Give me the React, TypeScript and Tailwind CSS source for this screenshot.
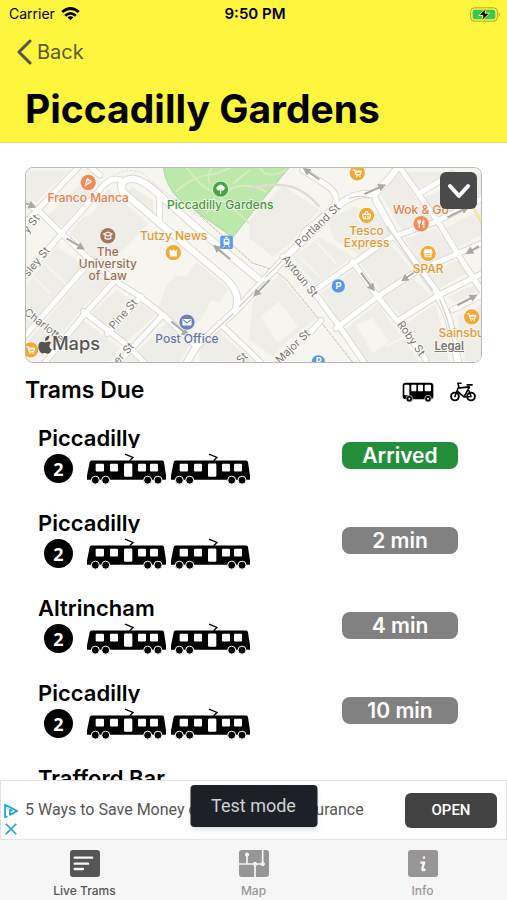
import React from 'react';

const trams = [
  { id: 1, destination: 'Piccadilly', carriages: 2, due: 'Arrived' },
  { id: 2, destination: 'Piccadilly', carriages: 2, due: '2 min' },
  { id: 3, destination: 'Altrincham', carriages: 2, due: '4 min' },
  { id: 4, destination: 'Piccadilly', carriages: 2, due: '10 min' },
  { id: 5, destination: 'Trafford Bar', carriages: 2, due: '12 min' },
];

const mainRoads = [
  'M0 120 L60 155 L125 220 L200 290 L290 365 L360 410 L430 465 L530 560',
  'M0 205 L195 0',
  'M20 345 L125 220 L235 95 Q265 50 300 58 L310 78',
  'M0 545 L215 300',
  'M65 620 L195 462 L285 362',
  'M190 455 L330 562 L375 610',
  'M262 522 L365 410',
  'M285 620 L430 465',
  'M200 10 L240 45',
  'M420 105 L420 190',
  'M600 490 L690 575 L735 620',
  'M850 30 L925 78 Q970 110 935 150 L860 210 Q845 230 840 255',
  'M790 290 L880 390 L960 500 L1040 615',
  'M885 392 L1010 305 L1110 235 L1250 185 L1400 110',
  'M1140 20 L1190 90 L1260 190 L1340 320 L1400 410',
  'M950 505 L1075 410 L1190 335 L1400 245',
  'M1000 305 L1075 410 L1140 490 L1220 600',
  'M1140 480 L1260 405 L1400 335',
  'M1300 450 L1400 400',
  'M875 515 L905 482',
  'M1200 100 L1300 40',
];

const wideRoads = [
  'M310 95 Q290 60 340 55 Q375 60 420 105 L545 215 L715 355',
  'M310 95 L420 190 L600 340 Q665 390 650 440',
  'M495 620 L530 560 L650 450 L725 370 L810 280 L880 215 L965 130 Q1010 95 1065 103 L1110 55 L1140 15',
  'M1070 120 L1130 230 L1255 400 L1290 480 L1320 620',
];

const arrows = [
  'M140 235 L185 263', 'M455 485 L500 522', 'M632 298 L590 262', 'M900 58 L860 30', 'M1035 102 L1090 78',
  'M750 360 L710 402', 'M1025 338 L1060 385', 'M1195 330 L1155 358', 'M1285 172 L1340 145', 'M1380 258 L1350 276',
  'M1315 436 L1365 410', 'M15 128 L38 138',
];

function Pin({ x, y, color, children }: { x: number; y: number; color: string; children?: React.ReactNode }) {
  return (
    <g transform={`translate(${x} ${y})`}>
      <circle r="25" fill="#fff" opacity="0.7" />
      <circle r="23" fill={color} />
      <g fill="none" stroke="#fff" strokeWidth="3.5" strokeLinecap="round" strokeLinejoin="round">{children}</g>
    </g>
  );
}

function MapLabel({ x, y, color, lines }: { x: number; y: number; color: string; lines: string[] }) {
  return (
    <text x={x} y={y} fill={color} stroke="#f8f6f0" strokeWidth="5" paintOrder="stroke" textAnchor="middle" fontSize="36" fontWeight="500">
      {lines.map((line, i) => (
        <tspan key={line} x={x} dy={i === 0 ? 0 : 37}>{line}</tspan>
      ))}
    </text>
  );
}

function StreetLabel({ x, y, angle, name }: { x: number; y: number; angle: number; name: string }) {
  return (
    <text transform={`translate(${x} ${y}) rotate(${angle})`} fill="#77746f" stroke="#fff" strokeWidth="5" paintOrder="stroke" textAnchor="middle" fontSize="33">
      {name}
    </text>
  );
}

const Cart = () => (
  <>
    <path d="M-12 -9 H-8 L-4 6 H9 L12 -5 H-7" />
    <path d="M-6 -2 H10" />
    <path d="M-2 11 h1 M7 11 h1" />
  </>
);

const Basket = () => (
  <>
    <path d="M-12 -3 H12 L9 10 H-9 Z M-6 -4 L-2 -12 M6 -4 L2 -12" />
    <path d="M-4 2 V6 M4 2 V6" />
  </>
);

function StopMap() {
  return (
    <svg viewBox="18 23 1368 584" preserveAspectRatio="xMidYMid slice" className="block h-[194px] w-full" role="img" aria-label="Map of Piccadilly Gardens">
      <rect x="-200" y="-200" width="1900" height="1000" fill="#f7f5ef" />
      <g fill="#efede7">
        <path d="M20 30 H150 L45 130 L20 115Z" />
        <path d="M75 175 L215 40 L240 65 L130 200Z" />
        <path d="M265 85 L385 190 L320 260 L250 320 L150 220 L190 170 L215 165Z" />
        <path d="M20 375 L110 260 L190 315 L20 505Z" />
        <path d="M205 330 L270 370 L185 445 L70 590 H20 V550Z" />
        <path d="M440 375 L470 345 L500 350 L530 305 L625 385 L600 430 L575 420 L550 470 L500 530 L415 450Z" />
        <path d="M290 390 L340 420 L255 500 L215 460Z" />
        <path d="M365 430 L410 465 L320 545 L280 520Z" />
        <path d="M190 480 L300 565 L270 605 H95Z" />
        <path d="M440 490 L510 555 L480 605 H320Z" />
        <path d="M335 80 L400 120 V170 L320 100Z" />
        <path d="M590 510 L700 605 H540 V565Z" />
        <path d="M690 180 L790 75 L900 150 L800 260 L760 290 L690 235Z" />
        <path d="M700 420 L780 345 L890 475 L820 530 L760 590 L690 540Z" />
        <path d="M820 295 L900 230 L1000 290 L890 375Z" />
        <path d="M925 180 L1005 140 L1075 160 L1120 225 L1020 285 L945 240Z" />
        <path d="M905 400 L1000 330 L1060 405 L955 485Z" />
        <path d="M1020 305 L1110 250 L1180 330 L1085 395Z" />
        <path d="M1090 415 L1180 355 L1235 405 L1145 465Z" />
        <path d="M970 515 L1075 430 L1200 605 H1045Z" />
        <path d="M1155 495 L1250 430 L1290 605 H1225Z" />
        <path d="M1085 100 L1140 40 L1240 185 L1150 215Z" />
        <path d="M1160 35 H1290 L1200 85Z" />
        <path d="M1210 115 L1386 35 V100 L1265 170Z" />
        <path d="M1275 205 L1386 150 V225 L1320 260Z" />
        <path d="M1160 235 L1250 205 L1310 275 L1200 315Z" />
        <path d="M1210 345 L1320 300 L1345 340 L1260 385Z" />
        <path d="M1285 410 L1386 365 V390 L1305 430Z" />
        <path d="M1315 470 L1386 435 V605 H1340Z" />
      </g>
      <g fill="#f7f5ef">
        <path d="M725 470 L780 425 L835 500 L775 550Z" />
        <path d="M1010 495 L1060 475 L1110 545 L1060 580Z" />
      </g>
      <g fill="none" stroke="#f8f6f1" strokeWidth="5">
        <path d="M40 350 L90 400 M75 310 L140 375 M840 290 L900 350 M890 245 L950 310 M1015 170 L1045 230 M960 520 L1010 590 M1100 560 L1180 520" />
      </g>
      <path d="M430 15 Q435 75 480 120 L640 232 L700 155 L815 15Z" fill="#bde8ab" stroke="#9cc98c" strokeWidth="2" />
      <g fill="none" stroke="#dcebc4" strokeWidth="5">
        <path d="M500 20 Q540 80 580 95 M470 95 Q510 50 590 40 L640 20 M585 110 L560 160 M600 110 L690 190 M625 90 Q680 60 740 95 M720 20 Q740 60 800 30 M570 70 Q560 40 580 20 M690 30 L640 70" />
      </g>
      <g fill="none" stroke="#dedbd2" strokeWidth="7">
        <path d="M690 85 Q740 70 790 75 Q850 80 900 140" />
        <path d="M280 45 Q330 20 370 40 L420 85 L540 170" strokeWidth="3" strokeDasharray="8 5" />
        <path d="M540 165 L700 310 Q780 330 810 370 L900 480 L1010 620" stroke="#bfbcb5" strokeWidth="3" strokeDasharray="10 3" />
      </g>
      <g fill="none" strokeLinejoin="round" strokeLinecap="round">
        <g stroke="#d8d5cf">
          <g strokeWidth="20">{mainRoads.map(d => <path key={d} d={d} />)}</g>
          <g strokeWidth="24">{wideRoads.map(d => <path key={d} d={d} />)}</g>
        </g>
        <g stroke="#fff">
          <g strokeWidth="15">{mainRoads.map(d => <path key={d} d={d} />)}</g>
          <g strokeWidth="19">{wideRoads.map(d => <path key={d} d={d} />)}</g>
        </g>
        <path d="M545 550 L640 462 M660 440 L735 365 M740 350 L800 290 M990 115 Q1020 103 1050 113 M1105 200 L1180 310 L1240 390 M1262 420 L1285 480 L1305 560" stroke="#d3d0ca" strokeWidth="4" />
        <path d="M1355 125 L1400 215" stroke="#f7e3a1" strokeWidth="7" />
      </g>
      <defs>
        <marker id="tip" viewBox="0 0 10 10" refX="5" refY="5" markerWidth="4" markerHeight="4" orient="auto">
          <path d="M0 0 L10 5 L0 10Z" fill="#aaa8a5" />
        </marker>
      </defs>
      <g stroke="#aaa8a5" strokeWidth="6">
        {arrows.map(d => <path key={d} d={d} markerEnd="url(#tip)" />)}
      </g>

      <g fontFamily="Inter, sans-serif">
        <StreetLabel x={42} y={198} angle={-52} name="y St" />
        <StreetLabel x={58} y={312} angle={-50} name="sley St" />
        <StreetLabel x={66} y={505} angle={38} name="Charlotte" />
        <StreetLabel x={318} y={470} angle={-48} name="Pine St" />
        <StreetLabel x={320} y={588} angle={-48} name="er St" />
        <StreetLabel x={902} y={204} angle={-44} name="Portland St" />
        <StreetLabel x={833} y={355} angle={51} name="Aytoun St" />
        <StreetLabel x={828} y={568} angle={-44} name="Major St" />
        <StreetLabel x={1167} y={542} angle={55} name="Roby St" />
        <StreetLabel x={675} y={603} angle={-44} name="St" />

        <MapLabel x={205} y={126} color="#e6804f" lines={['Franco Manca']} />
        <MapLabel x={602} y={148} color="#45993d" lines={['Piccadilly Gardens']} />
        <MapLabel x={462} y={241} color="#e09b35" lines={['Tutzy News']} />
        <MapLabel x={264} y={287} color="#9a7059" lines={['The', 'University', 'of Law']} />
        <MapLabel x={502} y={549} color="#6374ad" lines={['Post Office']} />
        <MapLabel x={1042} y={224} color="#e09b35" lines={['Tesco', 'Express']} />
        <MapLabel x={1205} y={163} color="#e6804f" lines={['Wok & Go']} />
        <MapLabel x={1227} y={338} color="#e09b35" lines={['SPAR']} />
        <MapLabel x={1360} y={533} color="#e09b35" lines={["Sainsbury's"]} />

        <Pin x={205} y={67} color="#f58a56">
          <path d="M-9 10 L10 -3 L-3 -11Z M-1 -4 h1 M0 2 h1" />
        </Pin>
        <Pin x={603} y={87} color="#46a541">
          <path d="M0 12 V-2" />
          <path d="M-8 2 Q-14 -4 -8 -7 Q0 -17 8 -7 Q14 -4 8 2Z" fill="#fff" />
        </Pin>
        <Pin x={264} y={227} color="#a2765f">
          <path d="M-13 -5 L1 -11 L13 -5 L1 1Z M-8 0 V8 Q1 12 9 8 V0" />
        </Pin>
        <Pin x={461} y={278} color="#f6a832">
          <path d="M-10 -8 L-5 -2 L0 -8 L5 -2 L10 -8 L9 10 H-9Z" fill="#fff" />
        </Pin>
        <Pin x={502} y={487} color="#6c80bd">
          <path d="M-12 -8 H12 V8 H-12Z" fill="#fff" />
          <path d="M-10 -6 L0 2 L10 -6" stroke="#6c80bd" />
        </Pin>
        <Pin x={1042} y={166} color="#f6a832"><Basket /></Pin>
        <Pin x={1014} y={38} color="#f6a832"><Cart /></Pin>
        <Pin x={1358} y={471} color="#f6a832"><Cart /></Pin>
        <Pin x={32} y={570} color="#f6a832"><Cart /></Pin>
        <Pin x={1206} y={191} color="#f58a56">
          <path d="M-6 -11 V11 M-10 -11 V-5 Q-6 0 -2 -5 V-11 M8 11 V-11 Q2 -6 4 2 H8" />
        </Pin>
        <Pin x={1227} y={280} color="#f6a832">
          <path d="M-9 -11 H9 L12 -2 H-12Z" fill="#fff" />
          <path d="M-9 0 V10 H9 V0 M-9 4 H9" />
        </Pin>
        <g fill="#fff" fontSize="28" fontWeight="700" textAnchor="middle">
          <circle cx="957" cy="378" r="20" fill="#5597ef" />
          <text x="958" y="388">P</text>
          <circle cx="897" cy="606" r="20" fill="#5597ef" />
          <text x="898" y="614">P</text>
        </g>
        <g transform="translate(621 247)">
          <rect x="-19" y="-20" width="38" height="40" rx="5" fill="#5b9cf0" />
          <rect x="-9" y="-12" width="18" height="20" rx="4" fill="#fff" />
          <path d="M-5 -7 H5 V-2 H-5Z" fill="#5b9cf0" />
          <path d="M-4 -15 H4 M-5 9 L-9 15 M5 9 L9 15" stroke="#fff" strokeWidth="3" />
        </g>

        <g fill="#555351">
          <text x="96" y="572" fontSize="55" fontWeight="500" stroke="#fff" strokeWidth="4" paintOrder="stroke">Maps</text>
          <g stroke="#fff" strokeWidth="3" paintOrder="stroke">
            <path d="M75 543 C74 534 81 528 88 527 C89 536 83 543 75 543Z" />
            <path d="M75 548 C79 548 84 541 94 549 C86 555 87 566 96 569 C92 579 85 584 79 581 C76 579 73 579 69 581 C61 583 52 565 56 554 C60 543 70 546 75 548Z" />
          </g>
        </g>
        <text x="1246" y="570" fontSize="34" fontWeight="600" fill="#77746f" stroke="#fff" strokeWidth="4" paintOrder="stroke" textDecoration="underline">Legal</text>
      </g>
    </svg>
  );
}

function TramIcon() {
  return (
    <svg viewBox="24 4 240 98" className="h-[33px] w-20" aria-hidden="true">
      <path d="M138 10 L162 20 L152 30" fill="none" stroke="#000" strokeWidth="4" />
      <path d="M38 29 H250 Q254 29 255 34 L261 74 V87 H24 V74 L32 34 Q33 29 38 29Z" />
      <g fill="#fff">
        <rect x="50" y="39" width="25" height="23" rx="3" />
        <rect x="93" y="39" width="24" height="23" rx="3" />
        <rect x="135" y="38" width="25" height="40" rx="4" />
        <rect x="177" y="39" width="24" height="23" rx="3" />
        <rect x="213" y="39" width="24" height="23" rx="3" />
      </g>
      <g stroke="#fff" strokeWidth="3">
        {[49, 80, 206, 237].map(cx => <circle key={cx} cx={cx} cy="88" r="12" />)}
      </g>
    </svg>
  );
}

function BusIcon() {
  return (
    <svg viewBox="0 0 96 60" className="h-5 w-8" aria-hidden="true">
      <rect x="2" y="2" width="92" height="50" rx="9" />
      <g fill="#fff">
        <rect x="7" y="8" width="15" height="32" rx="3" />
        <rect x="28" y="8" width="15" height="20" rx="2" />
        <rect x="48" y="8" width="15" height="20" rx="2" />
        <rect x="68" y="8" width="19" height="20" rx="3" />
      </g>
      <g stroke="#fff" strokeWidth="2">
        <circle cx="22" cy="50" r="10" />
        <circle cx="78" cy="50" r="10" />
      </g>
      <g fill="#fff">
        <circle cx="22" cy="50" r="3" />
        <circle cx="78" cy="50" r="3" />
      </g>
    </svg>
  );
}

function BikeIcon() {
  return (
    <svg viewBox="0 0 80 62" className="h-5 w-[26px]" fill="none" stroke="#000" strokeWidth="6" strokeLinecap="round" strokeLinejoin="round" aria-hidden="true">
      <circle cx="15" cy="45" r="12" />
      <circle cx="65" cy="45" r="12" />
      <path d="M15 45 L27 13 L24 4 H34 M25 19 L58 15 M22 28 L43 46 L60 16 M43 46 L65 45 L56 20 M53 9 H68" strokeWidth="5" />
    </svg>
  );
}

function StatusBar() {
  return (
    <div className="grid h-7 grid-cols-3 items-center pr-[6px] pl-[9px]">
      <div className="flex items-center gap-[6px] text-sm">
        <span>Carrier</span>
        <svg viewBox="0 0 56 42" className="h-[14px] w-[19px]" fill="none" stroke="#000" strokeWidth="8" aria-label="Wi-Fi">
          <path d="M3 15 Q28 -6 53 15" />
          <path d="M12 26 Q28 12 44 26" />
          <path d="M28 40 L19 31 Q28 24 37 31Z" fill="#000" stroke="none" />
        </svg>
      </div>
      <span className="text-center text-[15px] font-semibold">9:50 PM</span>
      <svg viewBox="0 0 93 44" className="h-[15px] w-[31px] justify-self-end" aria-label="Battery charging">
        <rect x="2" y="2" width="80" height="40" rx="11" fill="none" stroke="#b3a728" strokeWidth="3" />
        <rect x="8" y="8" width="68" height="28" rx="6" fill="#35c759" />
        <path d="M86 15 Q93 22 86 29Z" fill="#b3a728" />
        <path d="M49 3 L26 25 H39 L35 41 L59 18 H45Z" stroke="#fef53f" strokeWidth="3" />
      </svg>
    </div>
  );
}

function TabIcon({ name }: { name: string }) {
  return (
    <svg viewBox="0 0 90 81" className="h-[27px] w-[30px]" aria-hidden="true">
      <rect width="90" height="81" rx="9" fill="currentColor" />
      <g fill="none" stroke="#f7f6f7" strokeWidth="7" strokeLinecap="round">
        {name === 'Live Trams' && <path d="M14 23 H66 M14 41 H54 M14 57 H39" />}
        {name === 'Map' && (
          <>
            <path d="M24 14 V42 M0 42 H71 V0 M48 42 V81" strokeWidth="5" strokeLinecap="butt" />
            <g fill="#f7f6f7" strokeWidth="3">
              <circle cx="24" cy="14" r="5" />
              <circle cx="48" cy="42" r="5" />
              <circle cx="71" cy="42" r="5" />
            </g>
          </>
        )}
        {name === 'Info' && <path d="M48 22 V23 M40 38 H48 L43 56 Q42 63 50 59" />}
      </g>
    </svg>
  );
}

export default function App() {
  return (
    <div className="flex h-screen flex-col overflow-hidden bg-white font-[Inter,sans-serif] text-black">
      <header className="shrink-0 border-b border-[#e6de6a] bg-[#fef53f] pb-1">
        <StatusBar />
        <button type="button" className="ml-4 flex h-12 items-center gap-[5px] text-xl text-[#5c5a3a]">
          <svg viewBox="0 0 16 26" className="h-[26px] w-4" fill="none" stroke="#55544a" strokeWidth="3" strokeLinecap="round" strokeLinejoin="round" aria-hidden="true">
            <path d="M14 2 L3 13 L14 24" />
          </svg>
          Back
        </button>
        <h1 className="px-[25px] pt-1 text-[39px] leading-[58px] font-bold">Piccadilly Gardens</h1>
      </header>

      <main className="min-h-0 flex-1 overflow-hidden px-[25px] pt-6">
        <div className="relative overflow-hidden rounded-lg border border-[#b9b8b5]">
          <StopMap />
          <button type="button" aria-label="Collapse map" className="absolute top-1 right-1 flex size-[37px] items-center justify-center rounded-md bg-[#4b4a4a]">
            <svg viewBox="0 0 24 16" className="h-4 w-6" fill="none" stroke="#fff" strokeWidth="4" strokeLinecap="round" strokeLinejoin="round">
              <path d="M3 3 L12 13 L21 3" />
            </svg>
          </button>
        </div>

        <div className="flex h-[50px] items-center justify-between pt-1">
          <h2 className="text-[23px] font-semibold">Trams Due</h2>
          <div className="flex gap-4 pt-1 pr-[6px]">
            <button type="button" aria-label="Bus"><BusIcon /></button>
            <button type="button" aria-label="Bike"><BikeIcon /></button>
          </div>
        </div>

        <ul>
          {trams.map(tram => (
            <li key={tram.id} className="flex h-[85px] items-center justify-between pr-6 pl-[13px]">
              <div className="pb-[2px]">
                <p className="h-6 overflow-hidden text-[22px] leading-7 font-semibold">{tram.destination}</p>
                <div className="mt-1 flex items-center gap-1 pl-[6px]">
                  <span className="mr-[10px] flex size-[29px] items-center justify-center rounded-full bg-black font-['Open_Sans',sans-serif] text-lg font-bold text-white">
                    {tram.carriages}
                  </span>
                  <TramIcon />
                  <TramIcon />
                </div>
              </div>
              <span className={`flex h-[27px] w-[116px] items-center justify-center rounded-lg text-[21px] font-semibold text-white ${tram.due === 'Arrived' ? 'bg-[#238f3b]' : 'bg-[#818181]'}`}>
                {tram.due}
              </span>
            </li>
          ))}
        </ul>
      </main>

      <aside className="relative flex h-[60px] shrink-0 items-center justify-between border border-[#e3e3e3] bg-white pr-[9px] pl-[3px] font-[Roboto,sans-serif]">
        <div className="flex items-center gap-[7px]">
          <div className="flex flex-col gap-1 pt-5 text-[#22a7cf]">
            <svg viewBox="0 0 40 40" className="size-[14px]" fill="none" stroke="currentColor" strokeWidth="5" strokeLinejoin="round" aria-label="AdChoices">
              <path d="M10 35 L3 38 V2 L38 20 L17 31 V16 L24 20 M11 13 V14" />
            </svg>
            <button type="button" aria-label="Close ad">
              <svg viewBox="0 0 40 40" className="size-[14px]" fill="none" stroke="currentColor" strokeWidth="5">
                <path d="M5 5 L35 35 M35 5 L5 35" />
              </svg>
            </button>
          </div>
          <a href="#ad" className="text-base whitespace-nowrap text-[#565656]">5 Ways to Save Money on Your Home Insurance</a>
        </div>
        <button type="button" className="h-[35px] w-[92px] rounded-md bg-[#424242] text-[15px] font-medium text-white">OPEN</button>
        <div role="status" className="absolute top-1 left-1/2 flex h-[42px] w-[127px] -translate-x-1/2 items-center justify-center rounded-sm bg-[#1d2026] text-lg text-[#d0d1d3] shadow-md">
          Test mode
        </div>
      </aside>

      <nav className="grid h-[60px] shrink-0 grid-cols-3 bg-[#f7f6f7] text-xs font-medium">
        {['Live Trams', 'Map', 'Info'].map(tab => (
          <button key={tab} type="button" className={`flex flex-col items-center gap-[6px] pt-[10px] ${tab === 'Live Trams' ? 'text-[#555]' : 'text-[#979596]'}`}>
            <TabIcon name={tab} />
            <span>{tab}</span>
          </button>
        ))}
      </nav>
    </div>
  );
}
